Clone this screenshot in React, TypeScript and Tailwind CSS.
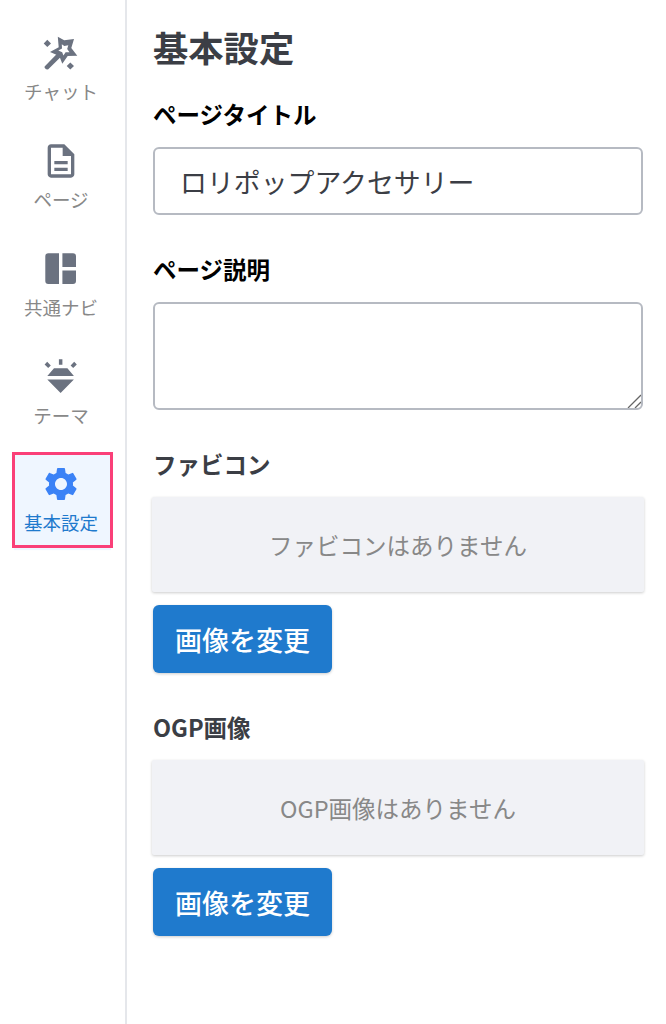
import { MdOutlineDescription, MdSettings } from "react-icons/md";
import type { ReactNode } from "react";

function WandIcon() {
  return (
    <svg viewBox="0 0 42 42" className="size-[42px]" fill="currentColor">
      <path
        fillRule="evenodd"
        d="M17.8 4.7 24.2 8.2 34 7 31.3 16 37.3 23.7 27.7 24 22.3 31.7 19.3 24 10 20 18.7 15.3ZM21.8 12.2 22 16.4 18.3 18.5 22.2 20.3 23.4 23.6 25.6 20.3 29.5 20.2 27.2 16.9 28.3 13.2 24.3 13.9Z"
      />
      <path d="m17.3 21.6 3.4 3.4L8 37.5 6 37.2 4.6 35.8V34.6ZM7.3 7.7 11 11.4 7.3 15 3.7 11.4ZM30.3 30.4 34 34l-3.7 3.6-3.6-3.6Z" />
    </svg>
  );
}

function LayoutIcon() {
  return (
    <svg viewBox="0 0 42 42" className="size-[42px]" fill="currentColor">
      <path d="M19 5.3V36H8.3a3 3 0 0 1-3-3V8.3a3 3 0 0 1 3-3ZM22.4 5.3H33a3 3 0 0 1 3 3V19H22.4ZM22.4 22.4H36V33a3 3 0 0 1-3 3H22.4Z" />
    </svg>
  );
}

function ThemeIcon() {
  return (
    <svg viewBox="0 0 42 42" className="size-[42px]" fill="currentColor">
      <path d="M14 12.2h13.4l6.5 7.9H7.3ZM7.3 23.5h26.6L20.6 37ZM18.9 3.3h3.5v5.4h-3.5Z" />
      <path d="m4.6 8.4 2.6-2.6 3.6 3.6L8.2 12ZM36.8 8.4l-2.6-2.6-3.6 3.6 2.6 2.6Z" />
    </svg>
  );
}

function NavItem({ icon, label, active = false }: { icon: ReactNode; label: string; active?: boolean }) {
  return (
    <div
      className={
        active
          ? "flex h-[96px] w-[101px] flex-col items-center border-[3px] border-[#fa3f78] bg-[#eff6ff] pt-[8px] pr-[3px] text-[#3b82f6] shadow-[0_4px_1px_-2px_#eff6ff]"
          : "flex h-[97px] w-[98px] flex-col items-center pt-3 text-[#6b7280]"
      }
    >
      <div className="flex h-[42px] items-center">{icon}</div>
      <span
        className={
          active
            ? "mt-[3px] text-[18.5px] leading-7 whitespace-nowrap text-[#1f7acd]"
            : "mt-[2.5px] text-[18.5px] leading-7 whitespace-nowrap text-[#888]"
        }
      >
        {label}
      </span>
    </div>
  );
}

function ImageSetting({ title, empty }: { title: string; empty: string }) {
  return (
    <section className="flex h-[263px] flex-col items-start">
      <h2 className="h-[50px] text-[23.5px] leading-[34px] font-bold text-[#3b3e45]">{title}</h2>
      <div className="-ml-px flex h-[95px] w-[492px] items-center justify-center rounded-[2px] bg-[#f1f2f6] pt-[3px] text-[23.5px] text-[#888] shadow-[0_1px_3px_rgba(0,0,0,0.2)]">
        {empty}
      </div>
      <button className="mt-[13px] h-[68px] w-[179px] rounded-md bg-[#1f7acd] pt-[3px] text-[27px] font-medium text-white shadow-[0_1px_3px_rgba(0,0,0,0.2)]">
        画像を変更
      </button>
    </section>
  );
}

export default function App() {
  return (
    <div className="flex h-[1024px] w-[666px] overflow-hidden bg-white font-['Noto_Sans_CJK_JP',sans-serif]">
      <nav className="flex w-[127px] shrink-0 flex-col gap-[11px] border-r-2 border-[#e5e7eb] pt-5 pl-3">
        <NavItem icon={<WandIcon />} label="チャット" />
        <NavItem icon={<MdOutlineDescription size={40} />} label="ページ" />
        <NavItem icon={<LayoutIcon />} label="共通ナビ" />
        <NavItem icon={<ThemeIcon />} label="テーマ" />
        <NavItem icon={<MdSettings size={40} />} label="基本設定" active />
      </nav>
      <main className="flex w-[539px] flex-col pt-[21px] pl-[26px]">
        <h1 className="h-[76px] text-[35.3px] leading-[52px] font-bold text-[#3b3e45]">基本設定</h1>
        <label className="h-[50px] text-[23.5px] leading-[34px] font-bold text-black">ページタイトル</label>
        <input
          defaultValue="ロリポップアクセサリー"
          className="h-[68px] w-[490px] rounded-md border-2 border-[#b6bac2] px-[25px] text-[26.9px] text-[#3b3e45]"
        />
        <label className="mt-[37px] h-[50px] text-[23.5px] leading-[34px] font-bold text-black">ページ説明</label>
        <div className="flex h-[108px] w-[490px] items-end justify-end rounded-md border-2 border-[#b6bac2]">
          <svg viewBox="0 0 14 14" className="size-[14px]" fill="none" stroke="#666" strokeWidth="1.3">
            <path d="M1 14 14 1M8 14l6-6" />
          </svg>
        </div>
        <div className="mt-[37px]">
          <ImageSetting title="ファビコン" empty="ファビコンはありません" />
          <ImageSetting title="OGP画像" empty="OGP画像はありません" />
        </div>
      </main>
    </div>
  );
}
